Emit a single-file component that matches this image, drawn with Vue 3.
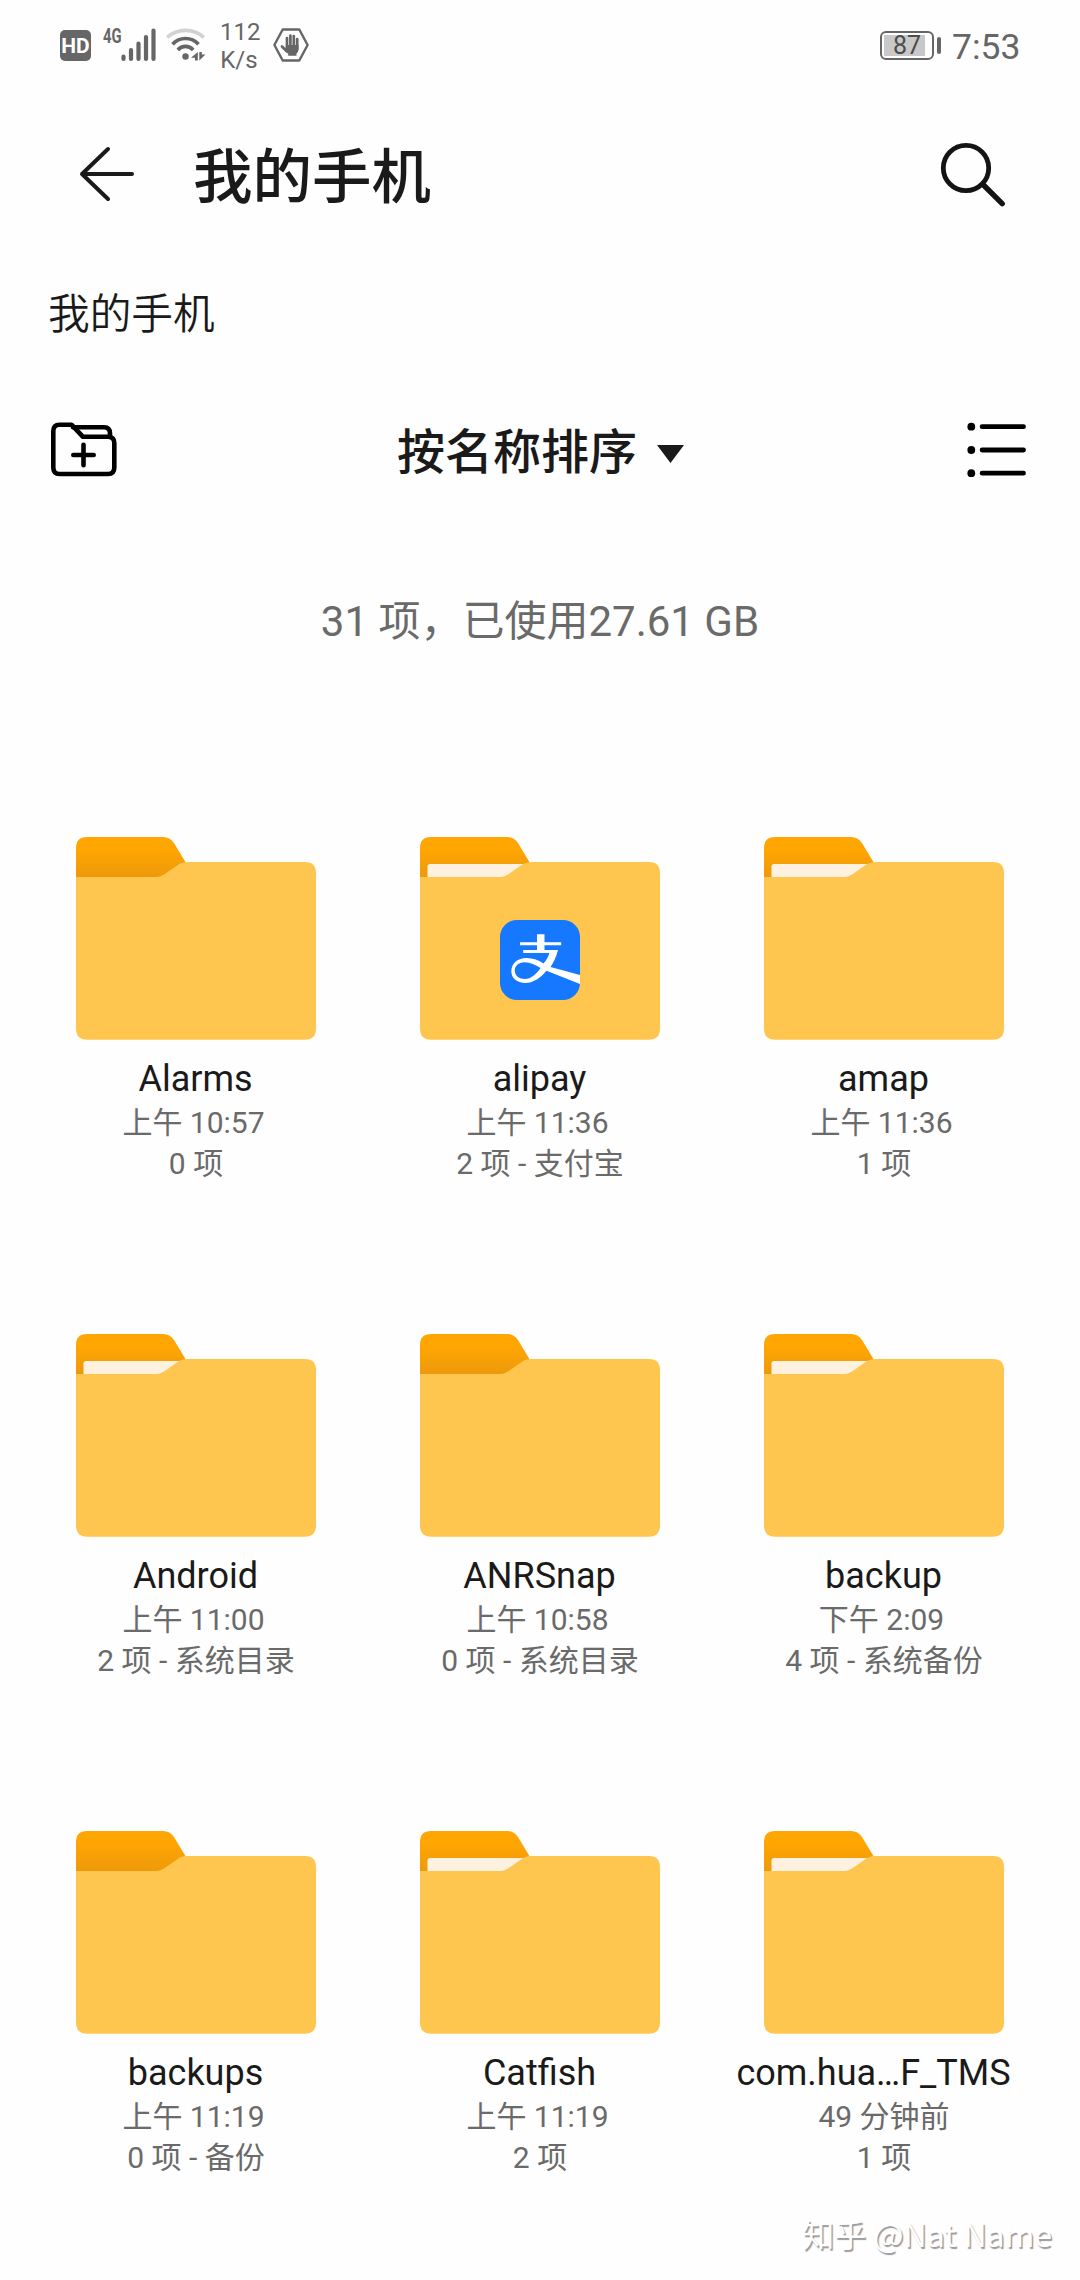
<script setup>
const folders = [
  { name: 'Alarms', time: '上午 10:57', info: '0 项', empty: true },
  { name: 'alipay', time: '上午 11:36', info: '2 项 - 支付宝', app: 'alipay' },
  { name: 'amap', time: '上午 11:36', info: '1 项' },
  { name: 'Android', time: '上午 11:00', info: '2 项 - 系统目录' },
  { name: 'ANRSnap', time: '上午 10:58', info: '0 项 - 系统目录', empty: true },
  { name: 'backup', time: '下午 2:09', info: '4 项 - 系统备份' },
  { name: 'backups', time: '上午 11:19', info: '0 项 - 备份', empty: true },
  { name: 'Catfish', time: '上午 11:19', info: '2 项' },
  { name: 'com.hua…F_TMS', time: '49 分钟前', info: '1 项', long: true },
]
</script>

<template>
  <main class="screen">
    <div class="status">
      <div class="hd">HD</div>
      <div class="net">4G</div>
      <svg class="signal" width="35" height="34" viewBox="0 0 35 34" fill="none" stroke="#666" stroke-width="4.2" stroke-linecap="round">
        <path d="M2.5 28.5v2.5M10 22v9M17.5 15.5v15.5M25 9v22M32.5 2.5v28.5" />
      </svg>
      <svg class="wifi" width="40" height="34" viewBox="0 0 40 34" fill="none" stroke-width="3.6">
        <path d="M1.2 9.5C11 0 28 0 37.8 9.5" stroke="#d2d2d2" />
        <path d="M6.5 16.2C13.5 8.5 25.5 8.5 32.5 16.2" stroke="#666" />
        <path d="M11.8 22C16 17.2 23 17.2 27.2 22" stroke="#666" />
        <circle cx="19.5" cy="28.5" r="3.2" fill="#666" />
        <path d="M25 29.8L31.8 24v8.500h-2.800v-2.700zM39.500 26.500L33.300 32.500v-8.500h2.500v2.500z" fill="#666" />
      </svg>
      <div class="speed"><span>112</span><span>K/s</span></div>
      <svg class="hand" width="36" height="34" viewBox="0 0 36 34">
        <path d="M9.7 1.5H26.3L34.6 17L26.3 32.5H9.7L1.4 17z" fill="none" stroke="#666" stroke-width="2.4" stroke-linejoin="round" />
        <g fill="none" stroke="#666" stroke-width="2.7" stroke-linecap="round">
          <path d="M14 10v10M17.4 7.7v12M20.8 8v12M24.2 11v10M9 18.5l5 5" />
        </g>
        <path d="M12.8 17h12.7v4.5q0 2.500-2 4v2.200h-8.300v-2l-4.500-4.500 2.100-.5z" fill="#666" />
      </svg>
      <div class="battery"><span>87</span></div>
      <i class="nub"></i>
      <div class="clock">7:53</div>
    </div>

    <header class="bar">
      <svg class="back" width="56" height="56" viewBox="0 0 56 56" fill="none" stroke="#1a1a1a" stroke-width="4" stroke-linecap="round" stroke-linejoin="round">
        <path d="M29 3L3 28L29 53M3 28H53" />
      </svg>
      <h1>我的手机</h1>
      <svg class="search" width="66" height="66" viewBox="0 0 66 66" fill="none" stroke="#141414" stroke-linecap="round">
        <circle cx="26" cy="27" r="22.7" stroke-width="4.8" />
        <path d="M43 43.5L62.200 62.700" stroke-width="5.4" />
      </svg>
    </header>

    <nav class="crumb">我的手机</nav>

    <div class="tools">
      <svg width="66" height="56" viewBox="0 0 66 56" fill="none" stroke="#000" stroke-width="4.6" stroke-linecap="round" stroke-linejoin="round">
        <path d="M20.500 2.700H8.500Q2.300 2.700 2.300 9V45.500Q2.300 52 8.500 52H57Q63.300 52 63.300 45.500V21Q63.300 14.800 57 14.800H32Z" />
        <path d="M22 5.300H53Q59 5.300 59 11.500V15" />
        <path d="M32.500 22.800V43.200M22.300 33H42.700" />
      </svg>
      <div class="sort"><span>按名称排序</span><svg width="27" height="18" viewBox="0 0 27 18"><path d="M0 0H27L13.500 18z" fill="#1a1a1a" /></svg></div>
      <svg width="60" height="56" viewBox="0 0 60 56" stroke="#000" stroke-width="4.800" stroke-linecap="round">
        <g stroke="none"><circle cx="4.300" cy="4.700" r="3.900" /><circle cx="4.300" cy="28" r="3.900" /><circle cx="4.300" cy="51.200" r="3.900" /></g>
        <path d="M15.100 4.700H56.500M15.100 28H56.500M15.100 51.200H56.500" />
      </svg>
    </div>

    <p class="summary">31 项，已使用27.61 GB</p>

    <svg width="0" height="0" class="defs">
      <linearGradient id="tab" x1="0" y1="0" x2="0" y2="1">
        <stop offset=".3" stop-color="#ffa602" />
        <stop offset="1" stop-color="#ec980c" />
      </linearGradient>
    </svg>

    <section class="grid">
      <article v-for="f in folders" :key="f.name" class="cell">
        <svg class="folder" width="240" height="203" viewBox="0 0 240 203">
          <path d="M0 42V11Q0 0 11 0H87Q94 0 98 6L110 26L100 42z" fill="url(#tab)" />
          <path v-if="!f.empty" d="M7.500 42V29.500Q7.500 27 10 27H110V42z" fill="#fef1e0" />
          <path d="M0 40H80Q84 40 88 37.500L101 28.500Q105 25 111 25H229Q240 25 240 36V191.500Q240 202.700 229 202.700H11Q0 202.700 0 191.500z" fill="#ffc64f" />
          <g v-if="f.app" transform="translate(80 83)">
            <rect width="80" height="80" rx="17" fill="#1677ff" />
            <path d="M37 14.300h7.500v8H61.200v3H44.500V30H58C56.300 37 53.500 42.500 50.500 47L80 55V64L46.500 50.800C40 58.500 33 63 25.500 63C17 63 11.300 58 11.300 51.500C11.300 43 18 38 26.500 38C33 38 39 40.200 43.500 43.500C46.500 40 48.500 36.500 49.300 33H23.200V30H37V25.300H20v-3h17z" fill="#fff" />
            <path d="M40.500 48C35.500 44.800 30 42.300 25 42.300C18 42.300 14.800 46 14.800 50.500C14.800 55.500 19 59 25 59C31 59 36.500 54 40.500 48z" fill="#1677ff" />
          </g>
        </svg>
        <h2 :class="{ long: f.long }">{{ f.name }}</h2>
        <p :class="{ clocked: !f.long }">{{ f.time }}</p>
        <p>{{ f.info }}</p>
      </article>
    </section>

    <div class="mark">知乎 @Nat Name</div>
  </main>
</template>

<style>
body { margin: 0; background: #fefefe; }
</style>

<style scoped>
.screen {
  position: relative;
  width: 1080px;
  height: 2280px;
  overflow: hidden;
  background: #fefefe;
  color: #1a1a1a;
  font-family: Roboto, "Noto Sans CJK SC", sans-serif;
}
h1, h2, p { margin: 0; font-weight: 400; }
svg { display: block; flex: none; }
.status {
  display: flex;
  align-items: flex-start;
  height: 90px;
  box-sizing: border-box;
  padding: 28px 61px 0 60px;
  color: #666;
}
.hd {
  width: 31px;
  height: 31px;
  margin-top: 2px;
  border-radius: 5px;
  background: #666;
  color: #fff;
  font: 700 21px/32px Roboto, sans-serif;
  text-align: center;
}
.net {
  width: 18px;
  margin: -2px 0 0 12px;
  font: 700 20px/20px Roboto, sans-serif;
  white-space: nowrap;
  transform: scaleX(.74);
  transform-origin: left;
}
.wifi { margin-left: 10px; }
.speed {
  display: flex;
  flex-direction: column;
  width: 38px;
  margin: -10px 0 0 14px;
  font-size: 24px;
  line-height: 28px;
  text-align: center;
}
.hand { margin: 0 auto 0 15px; }
.battery {
  width: 54px;
  height: 29px;
  margin-top: 3px;
  box-sizing: border-box;
  border: 2px solid #666;
  border-radius: 6px;
  background: linear-gradient(#c8c8c8, #c8c8c8) 2px 2px / 41px 21px no-repeat;
  color: #4c4c4c;
  font-size: 25px;
  line-height: 26px;
  padding-left: 11px;
}
.nub { width: 4px; height: 17px; margin: 9px 11px 0 3px; border-radius: 2px; background: #666; }
.clock { width: 67px; font-size: 35.5px; line-height: 38px; white-space: nowrap; }
.bar {
  display: flex;
  align-items: center;
  height: 168px;
  box-sizing: border-box;
  padding: 0 74px 0 79px;
}
h1 { margin: 8px auto 0 58px; font-size: 59.5px; font-weight: 500; line-height: 80px; }
.crumb { height: 110px; padding-left: 48px; font-size: 41.7px; font-weight: 350; line-height: 113px; }
.tools {
  display: flex;
  justify-content: space-between;
  align-items: center;
  height: 56px;
  margin-top: 54px;
  padding: 0 53px 0 51px;
}
.sort { display: flex; align-items: center; gap: 20px; margin-right: 3px; font-size: 48px; font-weight: 500; line-height: 56px; }
.sort span { padding-top: 5px; }
.sort svg { margin-top: 7px; }
.summary { margin-top: 112px; color: #6a6a6a; font-size: 42px; line-height: 64px; text-align: center; }
.defs { position: absolute; }
.grid {
  display: grid;
  grid-template-columns: repeat(3, 344px);
  grid-auto-rows: 497px;
  padding: 183px 24px 0;
}
.cell { display: flex; flex-direction: column; align-items: center; white-space: nowrap; }
h2 { margin: 17px 0 1px; padding-right: 1px; font-size: 36px; line-height: 44px; }
h2.long { padding-right: 21px; }
.cell p { color: #6a6a6a; font-size: 30px; line-height: 41px; }
.cell p.clocked { padding-right: 5px; }
.mark {
  position: absolute;
  right: 28px;
  bottom: 23px;
  color: #fff;
  font: 400 32px/48px "Noto Sans CJK SC", sans-serif;
  text-shadow: 1.5px 1.5px 1px #999;
  white-space: nowrap;
}
</style>
